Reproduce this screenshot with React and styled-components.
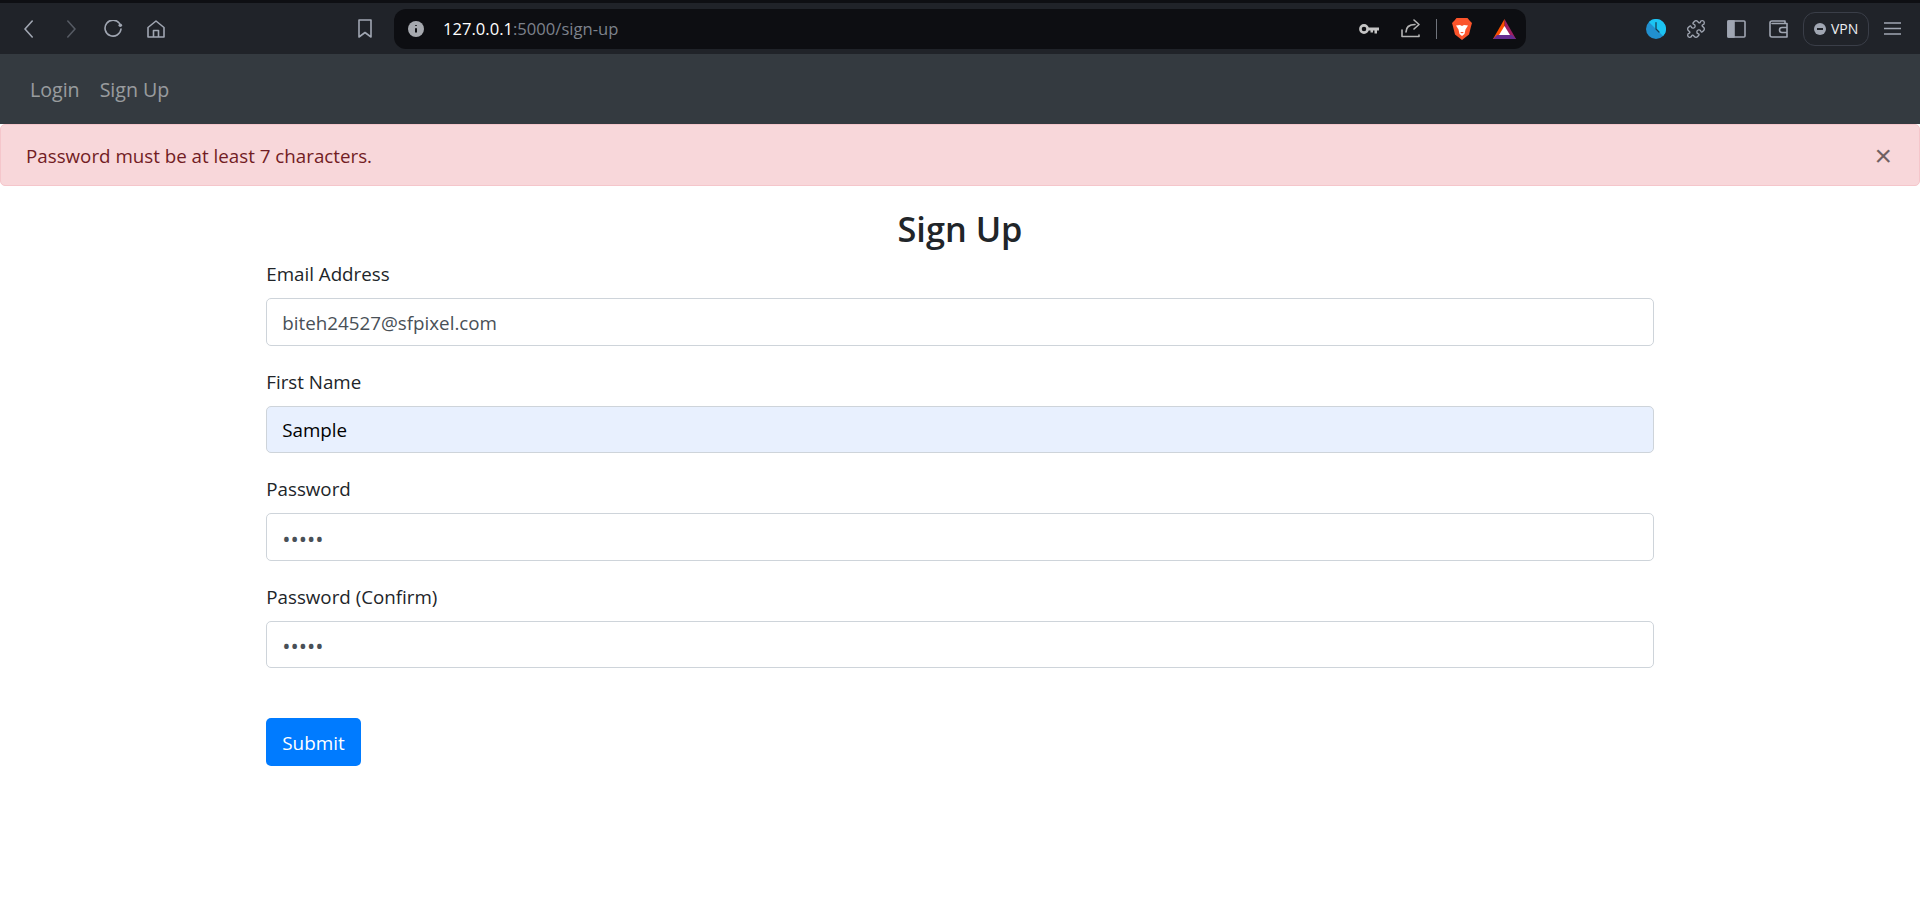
import React from "react";
import styled, { createGlobalStyle } from "styled-components";
import { Puzzle } from "lucide-react";

const FONT = `"Open Sans", "Noto Sans", sans-serif`;

const GlobalStyle = createGlobalStyle`
  html, body {
    margin: 0;
    padding: 0;
    background: #fff;
  }
  body {
    font-family: ${FONT};
    font-size: 18.75px;
    line-height: 30px;
    color: #212529;
  }
  * { box-sizing: border-box; }
`;

const Toolbar = styled.div`
  display: flex;
  align-items: center;
  height: 54px;
  padding-left: 24px;
  background: #202329;
  border-top: 3px solid #0e0f13;
`;

const Glyph = styled.svg`
  flex: none;
  display: block;
  margin-left: ${(p) => p.$gap || 0}px;
  fill: none;
  stroke: ${(p) => p.$tone || "#a0a6b2"};
  stroke-width: 1.6;
  stroke-linecap: round;
  stroke-linejoin: round;
`;

const PuzzleIcon = styled(Puzzle)`
  flex: none;
  margin-left: 20px;
  color: #a0a6b2;
`;

const UrlBar = styled.div`
  flex: 0 0 1132px;
  display: flex;
  align-items: center;
  height: 40px;
  margin-left: 22px;
  padding: 0 10px 0 14px;
  border-radius: 12px;
  background: #0d0e12;
`;

const UrlText = styled.div`
  flex: 1;
  margin-left: 19px;
  font-size: 16.6px;
  line-height: 22px;
  color: #7d828c;
  white-space: nowrap;
`;

const UrlHost = styled.span`
  color: #fff;
`;

const Divider = styled.div`
  flex: none;
  width: 1px;
  height: 20px;
  margin-left: 15px;
  background: #6f737b;
`;

const VpnPill = styled.div`
  flex: none;
  display: flex;
  align-items: center;
  gap: 5px;
  width: 66px;
  height: 34px;
  margin-left: 15px;
  padding-left: 10px;
  border: 1px solid #3a3e48;
  border-radius: 12px;
  font-size: 14px;
  line-height: 20px;
  color: #eceef1;
`;

const Navbar = styled.nav`
  display: flex;
  align-items: center;
  height: 70px;
  padding: 1px 20px 0;
  background: #343a40;
`;

const NavLink = styled.a`
  padding: 10px;
  font-size: 19.6px;
  color: rgba(255, 255, 255, 0.5);
  text-decoration: none;
`;

const Alert = styled.div`
  display: flex;
  align-items: center;
  justify-content: space-between;
  height: 62px;
  padding: 2px 27px 0 25px;
  background: #f8d7da;
  border: 1px solid #f5c6cb;
  border-radius: 5px;
  color: #721c24;
`;

const CloseButton = styled.button`
  padding: 0;
  border: 0;
  background: transparent;
  font-family: "Liberation Sans", sans-serif;
  font-size: 30px;
  font-weight: 400;
  line-height: 30px;
  color: #000;
  opacity: 0.55;
`;

const Container = styled.div`
  width: 1425px;
  margin: 0 auto;
  padding: 0 18.75px;
`;

const Heading = styled.h3`
  margin: 0 0 8px;
  padding-top: 22px;
  font-size: 34.3px;
  font-weight: 600;
  line-height: 42px;
  text-align: center;
`;

const Group = styled.div`
  margin-bottom: 20px;
`;

const Label = styled.label`
  display: block;
  padding-top: 1px;
  margin-bottom: 9px;
`;

const Input = styled.input`
  display: block;
  width: 100%;
  height: 47.5px;
  padding: 9.5px 15px 7.5px;
  border: 1px solid #ced4da;
  border-radius: 5px;
  outline: none;
  font-family: ${FONT};
  font-size: ${(p) => (p.type === "password" ? "22px" : "18.8px")};
  color: ${(p) => (p.$filled ? "#000" : "#495057")};
  background: ${(p) => (p.$filled ? "#e8f0fe" : "#fff")};
`;

const SubmitButton = styled.button`
  display: block;
  height: 47.5px;
  margin-top: 50px;
  padding: 2px 16px 0;
  border: 0;
  border-radius: 5px;
  background: #007bff;
  font-family: ${FONT};
  font-size: 18.9px;
  color: #fff;
`;

const fields = [
  { label: "Email Address", type: "email", value: "biteh24527@sfpixel.com" },
  { label: "First Name", type: "text", value: "Sample", filled: true },
  { label: "Password", type: "password", value: "12345" },
  { label: "Password (Confirm)", type: "password", value: "12345" },
];

function BrowserBar() {
  return (
    <Toolbar>
      <Glyph width="9" height="18" viewBox="0 0 9 18">
        <path d="M8.2 1 1 9l7.2 8" />
      </Glyph>
      <Glyph $gap={34} $tone="#555a63" width="9" height="18" viewBox="0 0 9 18">
        <path d="M.8 1 8 9l-7.2 8" />
      </Glyph>
      <Glyph $gap={28} width="19" height="18" viewBox="0 0 19 18">
        <path d="M15.5 3.4A8 8 0 1 0 17 9" />
        <circle cx="16.3" cy="5.3" r="1.8" fill="#a0a6b2" stroke="none" />
      </Glyph>
      <Glyph $gap={24} width="18" height="18" viewBox="0 0 18 18">
        <path d="M1 7.5 9 1l8 6.5V17H1zM6.5 17v-6.5h5V17" />
      </Glyph>
      <Glyph $gap={193} width="14" height="19" viewBox="0 0 14 19">
        <path d="M1 1h12v17l-6-4.500-6 4.500z" />
      </Glyph>
      <UrlBar>
        <Glyph width="16" height="16" viewBox="0 0 16 16">
          <circle cx="8" cy="8" r="8" fill="#a6a9af" stroke="none" />
          <path d="M8 7.200v4.300M8 4.300v.6" stroke="#0d0e12" strokeWidth="2" strokeLinecap="butt" />
        </Glyph>
        <UrlText>
          <UrlHost>127.0.0.1</UrlHost>:5000/sign-up
        </UrlText>
        <Glyph width="20" height="12" viewBox="0 0 20 12">
          <circle cx="5" cy="6" r="3.600" stroke="#c4c4c4" strokeWidth="2.600" />
          <path d="M9 4.500h11v3h-2v3h-2.500v-3h-1.500v2h-2.500v-2H9z" fill="#c4c4c4" stroke="none" />
        </Glyph>
        <Glyph $gap={22} $tone="#b4b4b4" width="20" height="19" viewBox="0 0 20 19">
          <path d="M1 11v6.500h17V16M5 13c0-4.500 3-7.500 9-7.500M13 1l5 4.500-5 4.500" />
        </Glyph>
        <Divider />
        <Glyph $gap={15} width="20" height="22" viewBox="0 0 20 22">
          <path d="M4.500 0h11L17.500 2.500 20 5l-1 3.500-2 8-7 5.500-7-5.500-2-8L0 5l2.500-2.500z" fill="#fb542b" stroke="none" />
          <path d="M4 7.500 8 7l2 1 2-1 4 .5-2.500 4L12.500 16 10 18l-2.500-2-1-4.500z" fill="#fff" stroke="none" />
          <path d="M8 14h4l-2 1.500z" fill="#fb542b" stroke="none" />
        </Glyph>
        <Glyph $gap={21} width="23" height="20" viewBox="0 0 23 20">
          <path d="M11.500 0 23 20H17l-5.500-10z" fill="#9e1f63" stroke="none" />
          <path d="M11.500 0 0 20h6l5.500-10z" fill="#ff5000" stroke="none" />
          <path d="M0 20h23l-4-4H4z" fill="#662d91" stroke="none" />
          <path d="M11.500 7 17 16H6z" fill="#fff" stroke="none" />
        </Glyph>
      </UrlBar>
      <Glyph $gap={120} width="20" height="20" viewBox="0 0 20 20">
        <circle cx="10" cy="10" r="10" fill="#2190cf" stroke="none" />
        <path d="M2.900 2.900A10 10 0 0 1 17.100 17.100z" fill="#1cc4f2" stroke="none" />
        <path d="M10 3.500V10l3 3" stroke="#17384f" strokeWidth="1.200" />
      </Glyph>
      <PuzzleIcon size={20} strokeWidth={1.6} />
      <Glyph $gap={21} width="19" height="18" viewBox="0 0 19 18">
        <rect x="1" y="1" width="17" height="16" rx="1" />
        <rect x="1" y="1" width="6" height="16" fill="#a0a6b2" />
      </Glyph>
      <Glyph $gap={23} width="19" height="18" viewBox="0 0 19 18">
        <path d="M16 3.500V1H3a2 2 0 0 0-2 2v12a2 2 0 0 0 2 2h15V3.500H3M18 7.500h-5a2 2 0 0 0 0 5h5" />
      </Glyph>
      <VpnPill>
        <Glyph width="12" height="12" viewBox="0 0 12 12">
          <circle cx="6" cy="6" r="6" fill="#a0a6b2" stroke="none" />
          <path d="M3 6h6" stroke="#202329" strokeWidth="2" strokeLinecap="butt" />
        </Glyph>
        VPN
      </VpnPill>
      <Glyph $gap={15} width="17" height="13" viewBox="0 0 17 13">
        <path d="M0 1h17M0 6.500h17M0 12h17" strokeLinecap="butt" />
      </Glyph>
    </Toolbar>
  );
}

function App() {
  return (
    <>
      <GlobalStyle />
      <BrowserBar />
      <Navbar>
        <NavLink href="#login">Login</NavLink>
        <NavLink href="#sign-up">Sign Up</NavLink>
      </Navbar>
      <Alert>
        Password must be at least 7 characters.
        <CloseButton type="button">×</CloseButton>
      </Alert>
      <Container>
        <form>
          <Heading>Sign Up</Heading>
          {fields.map((f) => (
            <Group key={f.label}>
              <Label>{f.label}</Label>
              <Input type={f.type} defaultValue={f.value} $filled={f.filled} />
            </Group>
          ))}
          <SubmitButton type="button">Submit</SubmitButton>
        </form>
      </Container>
    </>
  );
}

export default App;
